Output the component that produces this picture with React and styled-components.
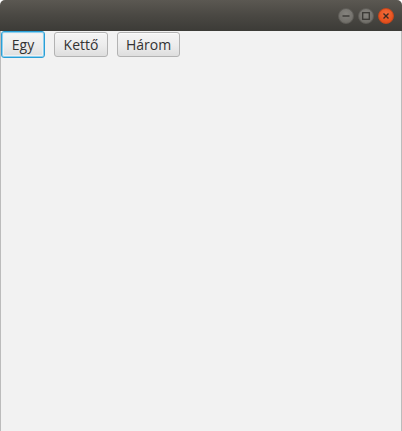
import React from "react";
import styled, { createGlobalStyle } from "styled-components";

const Global = createGlobalStyle`
  html, body { margin: 0; padding: 0; background: #ffffff; }
  #root { width: 402px; height: 431px; }
`;

const Window = styled.div`
  width: 402px;
  height: 431px;
  display: flex;
  flex-direction: column;
  box-sizing: border-box;
`;

const TitleBar = styled.div`
  height: 31px;
  flex: none;
  display: flex;
  align-items: center;
  justify-content: flex-end;
  gap: 4px;
  padding: 1px 8px 0 0;
  box-sizing: border-box;
  border-radius: 5px 5px 0 0;
  background: linear-gradient(to bottom, #5b5852 0%, #4a4843 50%, #3c3b37 100%);
`;

const Ctrl = styled.div`
  width: 16px;
  height: 16px;
  border-radius: 50%;
  box-sizing: border-box;
  display: flex;
  align-items: center;
  justify-content: center;
  background: ${(p) =>
    p.$close
      ? "radial-gradient(circle at 50% 35%, #f26d3d 0%, #e95420 60%, #d4461a 100%)"
      : "radial-gradient(circle at 50% 35%, #85837e 0%, #75736e 60%, #68665f 100%)"};
  border: 1px solid ${(p) => (p.$close ? "#c8461b" : "#5f5d58")};
`;

const Content = styled.div`
  flex: 1;
  background: #f2f2f2;
  border-left: 1px solid #bcbcbc;
  border-right: 1px solid #bcbcbc;
  box-sizing: border-box;
`;

const ToolRow = styled.div`
  display: flex;
  align-items: center;
  gap: 9px;
  height: 27px;
`;

const Button = styled.button`
  box-sizing: border-box;
  width: ${(p) => p.$w}px;
  height: ${(p) => (p.$focused ? 27 : 25)}px;
  padding: 0;
  margin: 0;
  font-family: "Open Sans", "Noto Sans", sans-serif;
  font-size: 14px;
  color: #333333;
  border-radius: 3px;
  border: 1px solid ${(p) => (p.$focused ? "#2a9fd6" : "#b3b3b3")};
  box-shadow: ${(p) =>
    p.$focused ? "inset 0 0 0 1px #8fd0ef, inset 0 0 0 2px #f0f0f0" : "inset 0 1px 0 #fbfbfb"};
  background: linear-gradient(to bottom, #f5f5f5 0%, #ececec 55%, #dedede 100%);
  display: flex;
  align-items: center;
  justify-content: center;
  line-height: 1;
`;

const Line = () => (
  <svg width="8" height="8" viewBox="0 0 8 8">
    <line x1="0.5" y1="4" x2="7.5" y2="4" stroke="#3a3935" strokeWidth="1.4" />
  </svg>
);
const Square = () => (
  <svg width="8" height="8" viewBox="0 0 8 8">
    <rect x="0.7" y="0.7" width="6.6" height="6.6" fill="none" stroke="#3a3935" strokeWidth="1.3" />
  </svg>
);
const Cross = () => (
  <svg width="8" height="8" viewBox="0 0 8 8">
    <path d="M1.5 1.5 L6.5 6.5 M6.5 1.5 L1.5 6.5" stroke="#3b2a22" strokeWidth="1.4" />
  </svg>
);

export default function App() {
  return (
    <>
      <Global />
      <Window>
        <TitleBar>
          <Ctrl><Line /></Ctrl>
          <Ctrl><Square /></Ctrl>
          <Ctrl $close><Cross /></Ctrl>
        </TitleBar>
        <Content>
          <ToolRow>
            <Button $w={44} $focused>Egy</Button>
            <Button $w={54}>Kettő</Button>
            <Button $w={63}>Három</Button>
          </ToolRow>
        </Content>
      </Window>
    </>
  );
}
